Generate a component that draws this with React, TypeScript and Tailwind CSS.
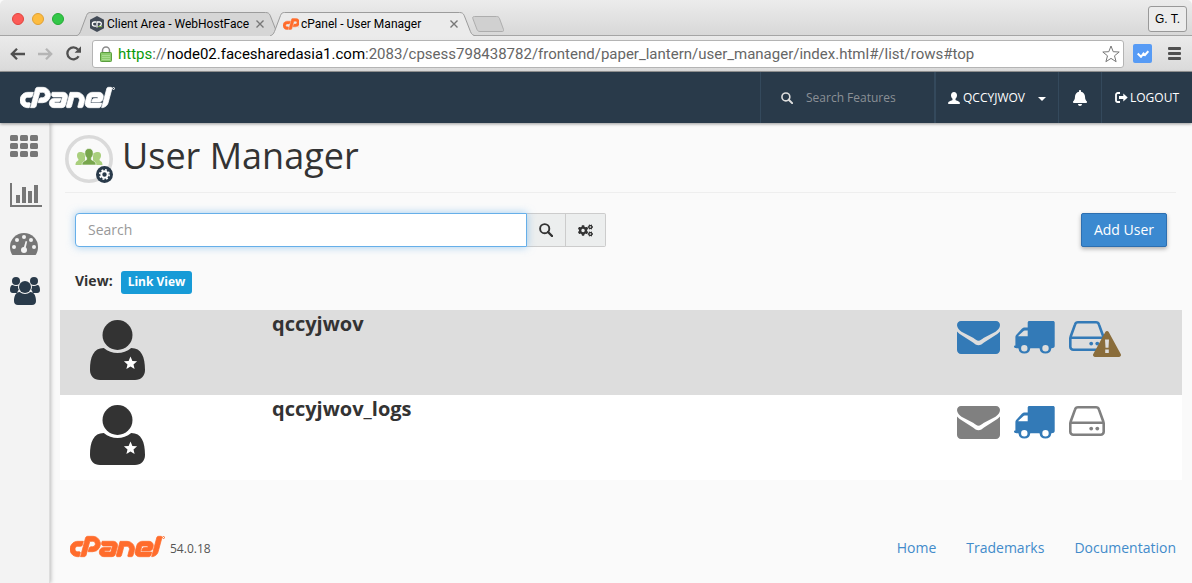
import type { ReactNode } from 'react';
import { FaBell, FaCogs } from 'react-icons/fa';
import { SiCpanel } from 'react-icons/si';

type IconProps = { className?: string };

type User = {
  name: string;
  email: boolean;
  ftp: boolean;
  disk: boolean;
  warning: boolean;
};

const users: User[] = [
  { name: 'qccyjwov', email: true, ftp: true, disk: true, warning: true },
  { name: 'qccyjwov_logs', email: false, ftp: true, disk: false, warning: false },
];

const footerLinks = ['Home', 'Trademarks', 'Documentation'];

function Logo({ className }: IconProps) {
  return (
    <span className={`flex items-start ${className}`}>
      <SiCpanel viewBox="0 9 24 6" strokeWidth="0.2" className="h-[23px] w-[92px]" />
      <svg viewBox="0 0 3 3" className="mt-px h-[3px] w-[3px]" fill="none" stroke="currentColor">
        <circle cx="1.5" cy="1.5" r="1" />
      </svg>
    </span>
  );
}

function SearchIcon({ className }: IconProps) {
  return (
    <svg viewBox="0 0 14 14" className={className} fill="none" stroke="currentColor">
      <circle cx="5.7" cy="5.7" r="4.6" strokeWidth="1.900" />
      <path d="M9 9l4 4" strokeWidth="2.4" strokeLinecap="round" />
    </svg>
  );
}

function PersonIcon({ className }: IconProps) {
  return (
    <svg viewBox="0 0 12 12" className={className} fill="currentColor">
      <path d="M6 0C4.200 0 3 1.300 3 3.200c0 1.500.6 2.700 1.500 3.500v1.200C3.800 8.500.2 9.200.2 10.600V12h11.600v-1.400c0-1.400-3.600-2.100-4.300-2.700V6.700C8.400 5.900 9 4.700 9 3.200 9 1.300 7.800 0 6 0z" />
    </svg>
  );
}

function LogoutIcon({ className }: IconProps) {
  return (
    <svg viewBox="0 0 13 11" className={className} fill="none" stroke="currentColor">
      <path d="M5 1H2.800A1.800 1.800 0 0 0 1 2.800v5.400A1.800 1.800 0 0 0 2.800 10H5" strokeWidth="1.800" />
      <path d="M8.300 1.500l4.400 4-4.400 4V7H4V4h4.300z" fill="currentColor" stroke="none" />
    </svg>
  );
}

function AppsIcon() {
  return (
    <svg viewBox="0 0 28 22" className="h-[22px] w-7" fill="currentColor">
      {[0, 8, 16].map((y) =>
        [0, 10, 20].map((x) => <rect key={`${x}-${y}`} x={x} y={y} width="8" height="6" rx="1.5" />)
      )}
    </svg>
  );
}

function ChartIcon() {
  return (
    <svg viewBox="0 0 32 24" className="h-6 w-8" fill="currentColor">
      <path d="M0 0h2v22h30v2H0z" />
      <path d="M6 12h4v8H6zM12 4h4v16h-4zM18 8h4v12h-4zM24 2h4v18h-4z" />
    </svg>
  );
}

function GaugeIcon() {
  return (
    <svg viewBox="0 0 28 22" className="h-[22px] w-7">
      <path d="M14 0a14 14 0 0 0-14 14c0 2.700.7 5.200 2 7.400.3.400.7.600 1.200.600h21.600c.5 0 .9-.2 1.200-.6 1.300-2.200 2-4.700 2-7.400A14 14 0 0 0 14 0z" fill="currentColor" />
      <g fill="#f3f3f3">
        <circle cx="4" cy="14" r="2" />
        <circle cx="7" cy="7" r="2" />
        <circle cx="14" cy="4" r="2" />
        <circle cx="21" cy="7" r="2" />
        <circle cx="24" cy="14" r="2" />
        <circle cx="14" cy="17" r="3" />
        <path d="M15.700 8l1.500.4-2 8.300-2-.5z" />
      </g>
    </svg>
  );
}

function GroupIcon() {
  return (
    <svg viewBox="0 0 30 28" className="h-7 w-[30px]" fill="currentColor">
      <circle cx="6" cy="4" r="4" />
      <circle cx="24" cy="4" r="4" />
      <path d="M2.700 8C.8 8 0 10 0 13c0 2 1 3 2.800 3h4.400C7.400 14.800 8 13.500 8.800 12.700 8 11.500 7.900 10 8.200 8.600 6.500 9.400 4.500 9.300 2.700 8z" />
      <path d="M27.300 8c1.900 0 2.700 2 2.700 5 0 2-1 3-2.800 3h-4.400c-.2-1.200-.8-2.500-1.600-3.300.8-1.200.9-2.700.6-4.100 1.700.8 3.700.7 5.500-.6z" />
      <circle cx="15" cy="10" r="6" />
      <path d="M9.700 15c3 2.600 7.600 2.600 10.600 0 4.200 0 5.700 4.500 5.700 9 0 2.500-1.500 4-4 4H8c-2.500 0-4-1.500-4-4 0-4.500 1.500-9 5.700-9z" />
    </svg>
  );
}

function UserManagerIcon() {
  return (
    <svg viewBox="0 0 50 50" className="h-[50px] w-[50px] shrink-0">
      <circle cx="24" cy="24" r="22.200" fill="#fafafa" stroke="#dadada" strokeWidth="3.600" />
      <g fill="#a9cf7d">
        <path d="M15 17c-2 0-3 1.500-3 3.500 0 1.500.5 2.800 1.400 3.600v1.200c-.5.800-2.900 1.100-2.900 4.700H20V18.500c-1-.9-3.200-1.500-5-1.500z" />
        <path d="M33 17c2 0 3 1.500 3 3.500 0 1.500-.5 2.800-1.400 3.600v1.200c.5.800 2.900 1.100 2.900 4.700H28V18.500c1-.9 3.200-1.500 5-1.500z" />
      </g>
      <path d="M24 13.500c-2.700 0-4.200 1.900-4.200 4.700 0 2 .8 3.500 1.900 4.500v1.800c-.8 1.200-4.700 1.400-4.700 5.500h14c0-4.100-3.900-4.300-4.700-5.500v-1.800c1.100-1 1.900-2.500 1.900-4.500 0-2.800-1.500-4.700-4.200-4.700z" fill="#77a64c" stroke="#fafafa" strokeWidth=".6" />
      <circle cx="39.500" cy="39.500" r="8.500" fill="#293a4a" />
      <circle cx="39.500" cy="39.500" r="3.200" fill="none" stroke="#fff" strokeWidth="2" />
      <circle cx="39.500" cy="39.500" r="4.700" fill="none" stroke="#fff" strokeWidth="1.600" strokeDasharray="1.850 1.840" />
    </svg>
  );
}

function AccountIcon() {
  return (
    <svg viewBox="0 0 55 60" className="h-[60px] w-[55px]">
      <circle cx="27.500" cy="15" r="15" fill="#333" />
      <path d="M13.800 28c8 6.700 19.400 6.700 27.400 0C51.500 28 55 37 55 50c0 6-4 10-10 10H10C4 60 0 56 0 50c0-13 3.500-22 13.800-22z" fill="#333" />
      <path d="M40.500 36.500l1.900 4.400 4.700.4-3.600 3.100 1.100 4.600-4.100-2.500-4.100 2.500 1.100-4.600-3.600-3.100 4.700-.4z" fill="#fff" />
    </svg>
  );
}

function EnvelopeIcon({ className }: IconProps) {
  return (
    <svg viewBox="0 0 43 33" className={`h-[33px] w-[43px] ${className}`} fill="currentColor">
      <path d="M4 0h35c2.300 0 4 1.700 4 4 0 2.800-2 5-4.500 6.800L26.500 17c-1.700 1.200-3.300 2.700-5 2.700s-3.300-1.500-5-2.700L4.500 10.800C2.600 9.300 0 6.800 0 4.300 0 1.700 1.600 0 4 0z" />
      <path d="M0 10.500c.8.900 1.700 1.700 2.700 2.400L16 21.500c1.700 1.300 3.500 2.800 5.500 2.800s3.800-1.500 5.500-2.800l13.300-8.600c1-.7 1.900-1.500 2.700-2.400V29c0 2.200-1.800 4-4 4H4c-2.200 0-4-1.800-4-4z" />
    </svg>
  );
}

function TruckIcon({ className }: IconProps) {
  return (
    <svg viewBox="0 0 41 33" className={`h-[33px] w-[41px] ${className}`} fill="currentColor">
      <path
        fillRule="evenodd"
        d="M15.300 0H39c1 0 1.700.7 1.700 1.500V25c0 1.700-1.400 2.200-3.300 2.200a6 6 0 0 1-11.900 0h-9.200a6 6 0 0 1-11.900 0H2.500C1 27.200 0 27 0 25.600c0-.8.600-1.100 1.400-1.100v-8.200c0-1.300.3-2 1.200-2.900l5.200-5.700c.9-1 1.800-1.300 3.200-1.300h2.700V1.500C13.700.7 14.400 0 15.300 0zM4.200 15.300h9.500V9.500h-3c-.5 0-.8.2-1.100.5l-5 4.500c-.3.300-.4.500-.4.800zM10.300 24a3.200 3.200 0 1 0 0 6.400 3.200 3.200 0 0 0 0-6.400zm21.200 0a3.200 3.200 0 1 0 0 6.400 3.200 3.200 0 0 0 0-6.400z"
      />
    </svg>
  );
}

function DiskIcon({ className }: IconProps) {
  return (
    <svg viewBox="0 0 36 30" className={`h-[30px] w-9 ${className}`} fill="none" stroke="currentColor" strokeWidth="2.600">
      <path d="M1.300 17.500v8.200c0 1.600 1.300 3 3 3h27.400c1.700 0 3-1.400 3-3v-8.200c0-.9-.3-1.700-.5-2.300L30 3.600c-.5-1.500-1.500-2.300-3-2.300H9c-1.500 0-2.500.8-3 2.300L1.800 15.200c-.2.600-.5 1.400-.5 2.300z" />
      <path d="M1.500 16.700h33" />
      <circle cx="22.200" cy="22.600" r="1.900" fill="currentColor" stroke="none" />
      <circle cx="28.300" cy="22.600" r="1.900" fill="currentColor" stroke="none" />
    </svg>
  );
}

function WarningIcon() {
  return (
    <svg viewBox="0 0 28 26" className="absolute top-[10px] left-6 h-[26px] w-7">
      <path d="M12.300 1.100c.8-1.400 2.600-1.400 3.400 0l12 21.900c.8 1.400-.1 3-1.700 3H2c-1.600 0-2.500-1.600-1.700-3z" fill="#8a6d3b" />
      <path d="M12 8.500h4l-.5 8.200h-3zM12.200 18.500h3.600v3.600h-3.600z" fill="#ddd" />
    </svg>
  );
}

function BrowserTab({ title, active, children }: { title: string; active?: boolean; children: ReactNode }) {
  return (
    <div className={`relative flex h-6 w-[206px] items-center pr-[18px] pl-[13px] ${active ? 'z-10 -ml-[12px]' : ''}`}>
      <svg viewBox="0 0 206 24" className="absolute inset-0 h-6 w-[206px]" fill={active ? '#ebebeb' : '#d6d6d6'}>
        <path
          d="M0 24c2.500-1 3.500-2 4.500-4.500L10.500 3.500C11.500 1 12.500.5 14.500.5h175c2.500 0 3.800.8 4.800 3.200l6.200 16c1 2.500 2.500 3.800 5.500 4.300"
          stroke="#9c9c9c"
        />
      </svg>
      <div className="relative mr-[2px] flex w-4 shrink-0 justify-center">{children}</div>
      <button className="relative min-w-0 flex-1 text-left font-[Roboto,sans-serif] text-xs whitespace-nowrap text-black">{title}</button>
      <button aria-label={`Close ${title}`} className="relative text-[#777]">
        <svg viewBox="0 0 8 8" className="h-2 w-2" stroke="currentColor" strokeWidth="1.400">
          <path d="M.5.5l7 7M7.500.5l-7 7" />
        </svg>
      </button>
    </div>
  );
}

function BrowserChrome() {
  return (
    <div className="text-black">
      <div className="flex h-9 items-end rounded-t-[5px] border-b border-[#a5a5a5] bg-linear-to-b from-[#ececec] to-[#d8d8d8] pr-[5px] pl-3">
        <div className="mr-3 flex gap-2 self-center pt-[2px]">
          <span className="h-3 w-3 rounded-full border border-[#e0443e] bg-[#fc5b57]" />
          <span className="h-3 w-3 rounded-full border border-[#dfa035] bg-[#fdbc40]" />
          <span className="h-3 w-3 rounded-full border border-[#24aa35] bg-[#33c748]" />
        </div>
        <div className="-mb-px flex items-end">
          <BrowserTab title="Client Area - WebHostFace">
            <svg viewBox="0 0 14 16" className="h-4 w-[14px]">
              <path d="M7 0l7 3.800v8.400L7 16l-7-3.800V3.800z" fill="#434b57" />
              <path d="M6 6H4.500a2 2 0 0 0 0 4.200H6M7 11.500V6h2.500a1.800 1.800 0 0 1 0 3.700" fill="none" stroke="#fff" strokeWidth="1.300" />
              <path d="M8 10.600h4" stroke="#8cc152" />
            </svg>
          </BrowserTab>
          <BrowserTab title="cPanel - User Manager" active>
            <SiCpanel viewBox="0 9.200 7.600 5.600" strokeWidth="0.2" className="h-3 w-4 text-[#ff6c2c]" />
          </BrowserTab>
          <button aria-label="New tab" className="-ml-1 self-center">
            <svg viewBox="0 0 32 16" className="h-4 w-8">
              <path d="M2.500.5h22c1.500 0 2.500.6 3 2l4 11c.4 1.300 0 2-1.200 2H8c-1.500 0-2.500-.7-3-2L.8 2.500C.4 1.200 1 .5 2.500.5z" fill="#d0d0d0" stroke="#adadad" />
            </svg>
          </button>
        </div>
        <button className="mb-[3px] ml-auto h-[26px] rounded-[3px] border border-[#999] bg-[#ececec] px-[6px] font-['Liberation_Sans',sans-serif] text-xs">G. T.</button>
      </div>

      <div className="flex h-9 items-center border-b border-[#999] bg-linear-to-b from-[#ebebeb] to-[#dadada] pr-[11px] pl-[10px]">
        <button aria-label="Back">
          <svg viewBox="0 0 15 12" className="h-3 w-[15px]" fill="none" stroke="#505050" strokeWidth="2.300">
            <path d="M15 6H2M7 .8L1.800 6 7 11.200" />
          </svg>
        </button>
        <button aria-label="Forward" className="ml-[13px]">
          <svg viewBox="0 0 15 12" className="h-3 w-[15px]" fill="none" stroke="#b5b5b5" strokeWidth="2.300">
            <path d="M0 6h13M8 .8L13.200 6 8 11.200" />
          </svg>
        </button>
        <button aria-label="Reload" className="ml-[13px]">
          <svg viewBox="0 0 15 15" className="h-[15px] w-[15px]">
            <path d="M12.600 10.300A6 6 0 1 1 12 3.500" fill="none" stroke="#505050" strokeWidth="2.300" />
            <path d="M15 .3v6.400H8.600z" fill="#505050" />
          </svg>
        </button>
        <div className="ml-[11px] flex h-7 min-w-0 flex-1 items-center rounded-[3px] border border-[#b4b4b4] bg-white pr-[3px] pl-[7px]">
          <svg viewBox="0 0 12 16" className="h-4 w-3 shrink-0">
            <path d="M2.500 7V4.500a3.500 3.500 0 0 1 7 0V7" fill="none" stroke="#8b8b8b" strokeWidth="1.500" />
            <rect x=".5" y="6.500" width="11" height="9" rx=".8" fill="#8bcb6c" stroke="#5a9e3e" />
            <path d="M2 9.500h8M2 11.500h8M2 13.500h8" stroke="#a9dc90" />
          </svg>
          <span className="ml-[6px] min-w-0 flex-1 overflow-hidden pt-px font-[Roboto,sans-serif] text-[15px] whitespace-nowrap text-[#666]">
            <span className="text-[#0b9a0b]">https</span>://<span className="text-black">node02.facesharedasia1.com</span>
            :2083/cpsess798438782/frontend/paper_lantern/user_manager/index.html#/list/rows#top
          </span>
          <button aria-label="Bookmark">
            <svg viewBox="0 0 18 18" className="h-[18px] w-[18px]">
              <path d="M9 1l2.200 5.700 6 .3-4.700 3.800 1.600 5.900L9 13.400l-5.100 3.300 1.600-5.900L.8 7l6-.3z" fill="#fff" stroke="#777" strokeLinejoin="round" />
            </svg>
          </button>
        </div>
        <button aria-label="Extension" className="ml-[9px] flex h-[19px] w-[19px] items-center justify-center rounded-[2px] bg-[#579bf5]">
          <svg viewBox="0 0 12 8" className="h-2 w-3" fill="none" stroke="#fff" strokeWidth="2">
            <path d="M.7 3.500L4 6.800 6.500 3.500 8 5l3.300-3.800" />
          </svg>
        </button>
        <button aria-label="Menu" className="ml-4 flex flex-col gap-[2px]">
          <span className="h-[3px] w-[13px] rounded-[1px] bg-[#505050]" />
          <span className="h-[3px] w-[13px] rounded-[1px] bg-[#505050]" />
          <span className="h-[3px] w-[13px] rounded-[1px] bg-[#505050]" />
        </button>
      </div>
    </div>
  );
}

function TopNav() {
  return (
    <header className="relative z-10 flex h-[51px] items-stretch bg-[#293a4a] text-xs text-white shadow-[0_1px_3px_rgba(0,0,0,0.4)]">
      <a href="#home" aria-label="cPanel" className="flex items-center pl-5">
        <Logo />
      </a>
      <label className="ml-auto flex w-[174px] items-center border-l border-[#34495c] pl-5">
        <SearchIcon className="h-3 w-3 shrink-0 text-[#ddd]" />
        <input
          aria-label="Search Features"
          placeholder="Search Features"
          className="ml-[13px] w-full min-w-0 bg-transparent placeholder:text-[#8b9096] focus:outline-none"
        />
      </label>
      <button className="flex w-[124px] items-center border-l-2 border-[#34495c] pl-3">
        <PersonIcon className="mr-[3px] h-3 w-3" />
        QCCYJWOV
        <svg viewBox="0 0 8 4" className="mt-[2px] mr-3 ml-auto h-1 w-2" fill="currentColor">
          <path d="M0 0h8L4 4z" />
        </svg>
      </button>
      <button aria-label="Notifications" className="flex w-[43px] items-center justify-center border-l border-[#34495c]">
        <FaBell className="h-4 w-4" />
      </button>
      <a href="#logout" className="flex w-[91px] items-center border-l border-[#34495c] pl-[13px]">
        <LogoutIcon className="mr-[2px] h-[11px] w-[13px]" />
        LOGOUT
      </a>
    </header>
  );
}

function Sidebar() {
  return (
    <nav className="w-[50px] shrink-0 border-r border-[#ddd] bg-[#f3f3f3] pt-3 pl-[10px] text-[#777] shadow-[1px_0_4px_rgba(0,0,0,0.25)]">
      <a href="#apps" aria-label="Home" className="block"><AppsIcon /></a>
      <a href="#stats" aria-label="Statistics" className="mt-[26px] block"><ChartIcon /></a>
      <a href="#dashboard" aria-label="Dashboard" className="mt-[26px] block"><GaugeIcon /></a>
      <a href="#users" aria-label="User Manager" className="mt-[22px] block text-[#293a4a]"><GroupIcon /></a>
    </nav>
  );
}

function UserRow({ user }: { user: User }) {
  return (
    <li className="flex h-[85px] items-start pt-[10px] pr-[61px] pl-[30px] odd:bg-[#ddd] even:bg-white">
      <AccountIcon />
      <h2 className="-mt-[10px] ml-[127px] text-xl font-bold">{user.name}</h2>
      <div className="mt-px ml-auto flex items-start gap-[14px]">
        <button aria-label="Email">
          <EnvelopeIcon className={user.email ? 'text-[#337ab7]' : 'text-[#808080]'} />
        </button>
        <button aria-label="FTP">
          <TruckIcon className={user.ftp ? 'text-[#337ab7]' : 'text-[#808080]'} />
        </button>
        <button aria-label="Web Disk" className="relative mr-4">
          <DiskIcon className={user.disk ? 'text-[#337ab7]' : 'text-[#808080]'} />
          {user.warning && <WarningIcon />}
        </button>
      </div>
    </li>
  );
}

export default function App() {
  return (
    <div className="flex min-h-screen flex-col bg-[#fafafa] font-['Open_Sans',sans-serif] text-[#333]">
      <BrowserChrome />
      <TopNav />
      <div className="flex flex-1">
        <Sidebar />
        <div className="min-w-0 flex-1 px-[10px]">
          <div className="mr-[6px] ml-[5px] flex h-[70px] items-start border-b border-[#eee] pt-3">
            <UserManagerIcon />
            <h1 className="ml-[7px] text-4xl leading-[42px]">User Manager</h1>
          </div>

          <div className="mt-5 flex items-center justify-between px-[15px] text-sm">
            <div className="flex h-[34px] w-[531px]">
              <input
                aria-label="Search"
                placeholder="Search"
                className="relative min-w-0 flex-1 rounded-l-[4px] border border-[#66afe9] bg-white px-3 shadow-[0_0_8px_rgba(102,175,233,0.6)] placeholder:text-[#999] focus:outline-none"
              />
              <button aria-label="Run search" className="flex w-[39px] items-center justify-center border-y border-r border-[#ccc] bg-[#eceeee]">
                <SearchIcon className="h-[14px] w-[14px]" />
              </button>
              <button aria-label="Settings" className="flex w-10 items-center justify-center rounded-r-[2px] border-y border-r border-[#ccc] bg-[#eceeee]">
                <FaCogs className="h-[15px] w-[15px]" />
              </button>
            </div>
            <button className="h-[34px] rounded-[2px] border border-[#2d6fb0] bg-[#3b89d0] px-3 text-white shadow-[0_2px_4px_rgba(0,0,0,0.3)]">Add User</button>
          </div>

          <div className="mt-6 flex items-center pl-[15px]">
            <span className="-mt-1 text-sm font-bold">View:</span>
            <button className="ml-2 h-[23px] rounded-[3px] bg-[#179bd7] px-[7px] pb-[2px] text-xs font-bold text-white">Link View</button>
          </div>

          <ul className="mt-4">
            {users.map((user) => (
              <UserRow key={user.name} user={user} />
            ))}
          </ul>

          <footer className="mt-[54px] flex items-center pr-[6px] pb-6 pl-[10px]">
            <Logo className="text-[#ff6c2c]" />
            <span className="mt-[6px] ml-[5px] text-xs text-[#555]">54.0.18</span>
            <nav className="mt-1 ml-auto flex gap-[30px] text-sm text-[#428bca]">
              {footerLinks.map((link) => (
                <a key={link} href={`#${link.toLowerCase()}`}>{link}</a>
              ))}
            </nav>
          </footer>
        </div>
      </div>
    </div>
  );
}
